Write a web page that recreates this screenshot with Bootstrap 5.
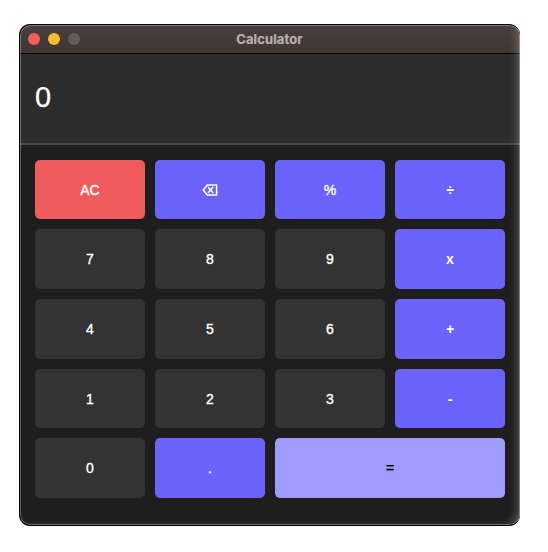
<!DOCTYPE html>
<html lang="en">
<head>
<meta charset="utf-8">
<meta name="viewport" content="width=device-width, initial-scale=1">
<title>Calculator</title>
<link href="https://cdn.jsdelivr.net/npm/bootstrap@5.3.0/dist/css/bootstrap.min.css" rel="stylesheet">
<style>
body { background: #fff; font-family: "Liberation Sans", Arial, sans-serif; padding: 24px 27px 0 19px; }
.calc-window { width: 501px; height: 502px; background: #1e1e1e; border-radius: 11px; border: 1px solid #000; border-right: 0; }
/* light rim and soft glow along the frame, laid over the content */
.calc-window::after { content: ""; position: absolute; inset: 0; border-radius: 10px; pointer-events: none;
  box-shadow: inset 0 0 0 1px rgba(255,255,255,.3), inset -9px -4px 10px -7px rgba(255,255,255,.28); }
.title-bar { height: 29px; padding-left: 8px; background: linear-gradient(#4a3e3c, #423634); border-bottom: 1px solid #000; }
.light { width: 12px; height: 12px; }
.light-close { background: #ef6159; }
.light-min { background: #f4bd2f; }
.light-max { background: #665b59; }
.window-title { font: 700 13px/28px Inter, sans-serif; letter-spacing: .12px; color: #b9b0ae; -webkit-text-stroke: .2px currentColor; top: 0; padding-right: 1px; }
.display-area { height: 91px; padding: 0 0 1px 15px; background: #2d2d2d; border-bottom: 2px solid #484848; color: #fff; font-size: 29px; -webkit-text-stroke: .25px currentColor; }
.keypad { display: grid; grid-template-columns: repeat(4, 110px); grid-template-rows: 59px 60px 60px 59px 60px; gap: 10px; padding: 15px 0 0 15px; }
.key { --bs-btn-border-radius: 5px; --bs-btn-color: #fff; --bs-btn-bg: #333; --bs-btn-hover-color: #fff; --bs-btn-hover-bg: #3d3d3d; --bs-btn-active-color: #fff; --bs-btn-active-bg: #444; font-size: 14px; line-height: 20px; -webkit-text-stroke: .35px currentColor; }
.key-op { --bs-btn-bg: #6c63ff; --bs-btn-hover-bg: #7b73ff; --bs-btn-active-bg: #5d54ee; }
.key-sign { font-weight: 700; -webkit-text-stroke: 0; }
.key-clear { --bs-btn-bg: #f05b5d; --bs-btn-hover-bg: #f36c6e; --bs-btn-active-bg: #dd4d50; }
.key-equals { --bs-btn-bg: #a09cff; --bs-btn-color: #000; --bs-btn-hover-bg: #aeaaff; --bs-btn-hover-color: #000; grid-column: span 2; }
</style>
</head>
<body>
<main class="calc-window position-relative overflow-hidden">
  <header class="title-bar position-relative d-flex align-items-center gap-2">
    <span class="light light-close rounded-circle"></span>
    <span class="light light-min rounded-circle"></span>
    <span class="light light-max rounded-circle"></span>
    <span class="window-title position-absolute start-0 w-100 text-center">Calculator</span>
  </header>
  <section class="display-area d-flex align-items-center">0</section>
  <section class="keypad">
    <button class="btn border-0 p-0 key key-clear">AC</button>
    <button class="btn border-0 p-0 key key-op d-flex align-items-center justify-content-center" aria-label="Delete">
      <svg width="16" height="12" viewBox="0 0 16 12" fill="none" stroke="currentColor" stroke-width="1.5"><path d="M5.2 1H14.6V11H5.2L1.3 6Z"/><path d="M5.9 3L11.3 9M11.3 3L5.9 9"/></svg>
    </button>
    <button class="btn border-0 p-0 key key-op">%</button>
    <button class="btn border-0 p-0 key key-op key-sign">÷</button>
    <button class="btn border-0 p-0 key">7</button>
    <button class="btn border-0 p-0 key">8</button>
    <button class="btn border-0 p-0 key">9</button>
    <button class="btn border-0 p-0 key key-op key-sign">x</button>
    <button class="btn border-0 p-0 key">4</button>
    <button class="btn border-0 p-0 key">5</button>
    <button class="btn border-0 p-0 key">6</button>
    <button class="btn border-0 p-0 key key-op key-sign">+</button>
    <button class="btn border-0 p-0 key">1</button>
    <button class="btn border-0 p-0 key">2</button>
    <button class="btn border-0 p-0 key">3</button>
    <button class="btn border-0 p-0 key key-op key-sign">-</button>
    <button class="btn border-0 p-0 key">0</button>
    <button class="btn border-0 p-0 key key-op">.</button>
    <button class="btn border-0 p-0 key key-equals">=</button>
  </section>
</main>
<script src="https://cdn.jsdelivr.net/npm/bootstrap@5.3.0/dist/js/bootstrap.bundle.min.js"></script>
</body>
</html>
